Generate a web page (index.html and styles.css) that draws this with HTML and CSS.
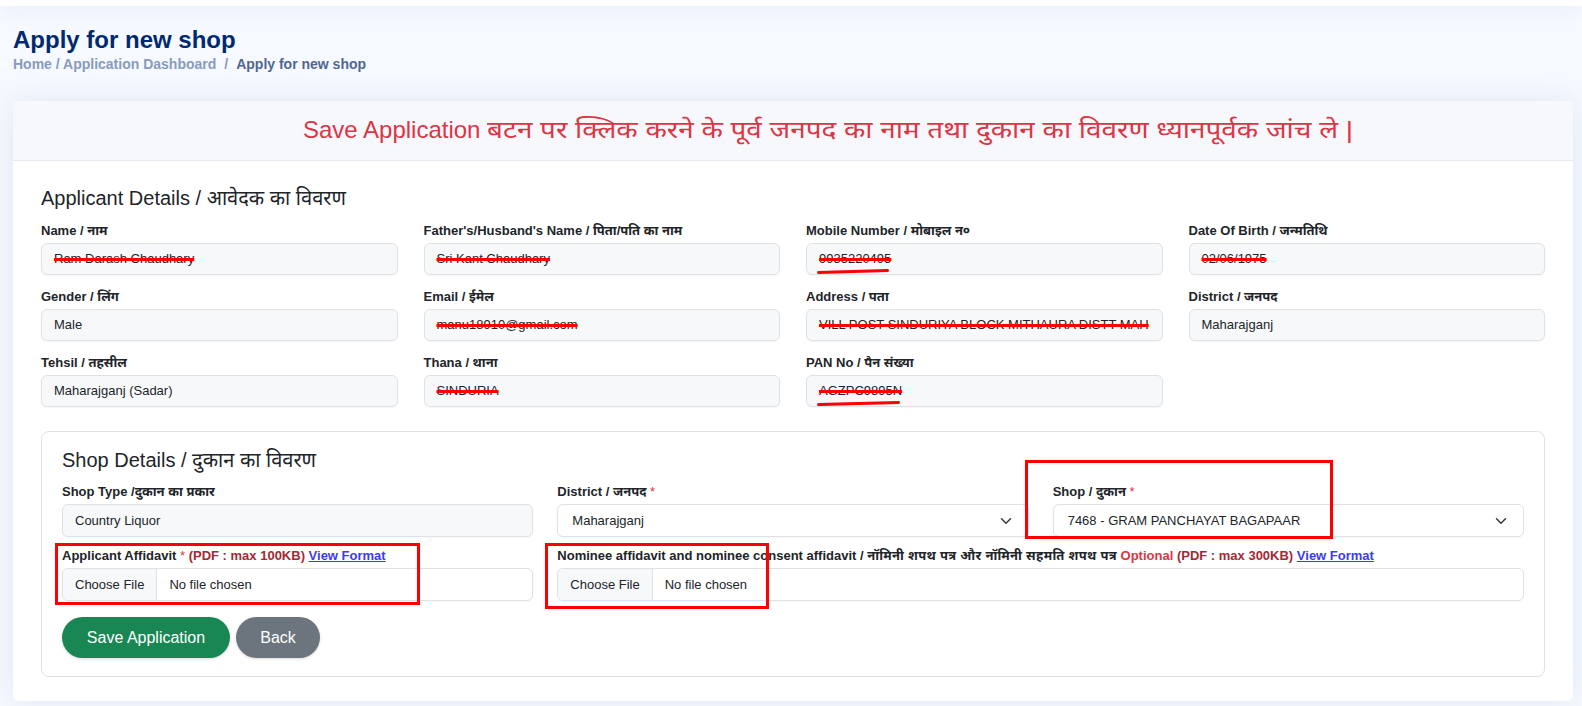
FILE: index.html
```html
<!DOCTYPE html>
<html lang="hi">
<head>
<meta charset="utf-8">
<title>Apply for new shop</title>
<link rel="stylesheet" href="styles.css">
</head>
<body>
<div class="topbar"></div>
<main class="main">
  <div class="pagetitle">
    <h1>Apply for new shop</h1>
    <nav class="crumbs"><span class="crumb">Home / Application Dashboard</span><span class="sep">/</span><span class="crumb-active">Apply for new shop</span></nav>
  </div>

  <section class="card">
    <div class="card-header"><span class="hdr-latin">Save Application </span><span class="hdr-deva">बटन पर क्लिक करने के पूर्व जनपद का नाम तथा दुकान का विवरण ध्यानपूर्वक जांच ले |</span></div>
    <div class="card-body">
      <h5 class="section-title">Applicant Details / आवेदक का विवरण</h5>
      <div class="grid4">
        <div class="field"><label>Name / नाम</label><div class="input ro"><span class="redact">Ram Darash Chaudhary</span></div></div>
        <div class="field"><label>Father's/Husband's Name / पिता/पति का नाम</label><div class="input ro"><span class="redact">Sri Kant Chaudhary</span></div></div>
        <div class="field"><label>Mobile Number / मोबाइल न०</label><div class="input ro"><span class="redact double">9935220495</span></div></div>
        <div class="field"><label>Date Of Birth / जन्मतिथि</label><div class="input ro"><span class="redact">02/06/1975</span></div></div>

        <div class="field"><label>Gender / लिंग</label><div class="input ro">Male</div></div>
        <div class="field"><label>Email / ईमेल</label><div class="input ro"><span class="redact">manu18910@gmail.com</span></div></div>
        <div class="field"><label>Address / पता</label><div class="input ro tight"><span class="redact">VILL POST SINDURIYA BLOCK MITHAURA DISTT MAH</span></div></div>
        <div class="field"><label>District / जनपद</label><div class="input ro">Maharajganj</div></div>

        <div class="field"><label>Tehsil / तहसील</label><div class="input ro">Maharajganj (Sadar)</div></div>
        <div class="field"><label>Thana / थाना</label><div class="input ro"><span class="redact">SINDURIA</span></div></div>
        <div class="field"><label>PAN No / पैन संख्या</label><div class="input ro"><span class="redact double">AGZPC9895N</span></div></div>
      </div>

      <div class="subcard">
        <h5 class="section-title">Shop Details / दुकान का विवरण</h5>
        <div class="grid3">
          <div class="field"><label>Shop Type /दुकान का प्रकार</label><div class="input ro tall">Country Liquor</div></div>
          <div class="field"><label>District / जनपद <span class="req">*</span></label><div class="input select tall"><span>Maharajganj</span><svg class="chev" width="12" height="8" viewBox="0 0 12 8"><path d="M1.5 1.8 L6 6.2 L10.5 1.8" fill="none" stroke="#343a40" stroke-width="1.5" stroke-linecap="round" stroke-linejoin="round"/></svg></div></div>
          <div class="field"><label>Shop / दुकान <span class="req">*</span></label><div class="input select tall"><span>7468 - GRAM PANCHAYAT BAGAPAAR</span><svg class="chev" width="12" height="8" viewBox="0 0 12 8"><path d="M1.5 1.8 L6 6.2 L10.5 1.8" fill="none" stroke="#343a40" stroke-width="1.5" stroke-linecap="round" stroke-linejoin="round"/></svg></div></div>

          <div class="field"><label>Applicant Affidavit <span class="req">*</span> <span class="note">(PDF : max 100KB)</span> <a class="link" href="#">View Format</a></label><div class="input file tall"><span class="file-btn">Choose File</span><span class="file-name">No file chosen</span></div></div>
          <div class="field span2"><label>Nominee affidavit and nominee consent affidavit / <span class="deva-wide">नॉमिनी शपथ पत्र और नॉमिनी सहमति शपथ पत्र</span> <span class="opt">Optional</span> <span class="note">(PDF : max 300KB)</span> <a class="link" href="#">View Format</a></label><div class="input file tall"><span class="file-btn">Choose File</span><span class="file-name">No file chosen</span></div></div>
        </div>
        <div class="actions">
          <button class="btn btn-save" type="button">Save Application</button>
          <button class="btn btn-back" type="button">Back</button>
        </div>
      </div>
    </div>
  </section>

  <div class="mark mark-affidavit"></div>
  <div class="mark mark-nominee"></div>
  <div class="mark mark-shop"></div>
</main>
</body>
</html>
```

FILE: styles.css
```css
* { box-sizing: border-box; }
html, body { margin: 0; padding: 0; }
body {
  background: #f6f9ff;
  font-family: "Liberation Sans", Arial, "Noto Sans Devanagari", "Nirmala UI", "Mangal", sans-serif;
  color: #212529;
  width: 1582px;
  height: 706px;
  overflow: hidden;
}
.topbar {
  height: 6px;
  background: #ffffff;
  box-shadow: 0 2px 20px rgba(1, 41, 112, 0.12);
  position: relative;
  z-index: 2;
}
.main {
  position: relative;
  padding: 19px 9px 0 13px;
}
.pagetitle h1 {
  margin: 0;
  font-size: 24px;
  line-height: 29px;
  font-weight: 700;
  color: #012970;
}
.crumbs {
  font-size: 14px;
  line-height: 21px;
  font-weight: 700;
  color: #899bbd;
}
.crumbs .sep { padding: 0 8px; }
.crumbs .crumb-active { color: #51678f; }

.card {
  margin-top: 26px;
  background: #ffffff;
  border-radius: 6px;
  box-shadow: 0 0 30px rgba(1, 41, 112, 0.09);
  overflow: hidden;
}
.card-header {
  background: #f7f8fb;
  border-bottom: 1px solid #e6e9ef;
  color: #dc3545;
  font-size: 24px;
  line-height: 36px;
  height: 60px;
  padding: 11px 16px 11px 290px;
  white-space: nowrap;
}
.hdr-deva {
  display: inline-block;
  transform: scaleX(1.16);
  transform-origin: left center;
}
.card-body {
  padding: 25px 28px 24px 28px;
}
.section-title {
  margin: 0 0 10px 0;
  font-size: 20px;
  line-height: 24px;
  font-weight: 400;
  color: #212529;
}
.card-body > .section-title { margin-bottom: 11px; }

.grid4 {
  display: grid;
  grid-template-columns: repeat(4, minmax(0, 1fr));
  column-gap: 26px;
  row-gap: 12px;
}
.grid3 {
  display: grid;
  grid-template-columns: repeat(3, minmax(0, 1fr));
  column-gap: 24px;
  row-gap: 9px;
}
.span2 { grid-column: span 2; }

.field { min-width: 0; }
.field label {
  display: block;
  font-size: 13px;
  line-height: 20px;
  height: 20px;
  font-weight: 700;
  color: #212529;
  margin-bottom: 2px;
  white-space: nowrap;
}
.deva-wide { letter-spacing: 0.3px; }
.req { color: #dc3545; font-weight: 400; }
.opt { color: #dc3545; }
.note { color: #a52834; }
.link { color: #3b3bf5; text-decoration: underline; }

.input {
  height: 32px;
  border: 1px solid #dee2e6;
  border-radius: 6px;
  background: #ffffff;
  font-size: 13px;
  line-height: 30px;
  padding: 0 12px;
  color: #212529;
  white-space: nowrap;
  overflow: hidden;
  box-shadow: 0 1px 2px rgba(0, 0, 0, 0.04);
}
.input.tight { padding-right: 2px; }
.input.tall { height: 33px; line-height: 31px; }
.input.ro { background: #f7f8fa; }

.redact {
  position: relative;
  text-decoration: line-through;
  text-decoration-color: #ff0000;
  text-decoration-thickness: 3px;
}
.redact.double::after {
  content: "";
  position: absolute;
  left: -2px;
  width: 100%;
  top: 19px;
  height: 3px;
  background: #ff0000;
  border-radius: 2px;
  transform: rotate(-1.5deg);
}

.input.select {
  display: flex;
  align-items: center;
  justify-content: space-between;
  padding: 0 16px 0 14px;
}
.chev { flex: none; }

.input.file {
  display: flex;
  padding: 0;
}
.file-btn {
  background: #f7f8fa;
  border-right: 1px solid #dee2e6;
  padding: 0 12px;
}
.file-name { padding: 0 12px; }

.subcard {
  margin-top: 24px;
  border: 1px solid #dee2e6;
  border-radius: 8px;
  padding: 16px 20px 18px 20px;
}
.actions {
  display: flex;
  gap: 6px;
  margin-top: 16px;
}
.btn {
  height: 41px;
  border: none;
  border-radius: 21px;
  color: #ffffff;
  font-family: "Liberation Sans", Arial, sans-serif;
  font-size: 16px;
  padding: 0;
  box-shadow: 0 1px 3px rgba(0, 0, 0, 0.15);
}
.btn-save { background: #198754; width: 168px; }
.btn-back { background: #6c757d; width: 84px; }

.mark {
  position: absolute;
  border: 3px solid #ff0000;
  pointer-events: none;
}
.mark-affidavit { left: 55px; top: 537px; width: 365px; height: 62px; }
.mark-nominee { left: 545px; top: 537px; width: 224px; height: 66px; }
.mark-shop { left: 1025px; top: 454px; width: 308px; height: 79px; }
```
